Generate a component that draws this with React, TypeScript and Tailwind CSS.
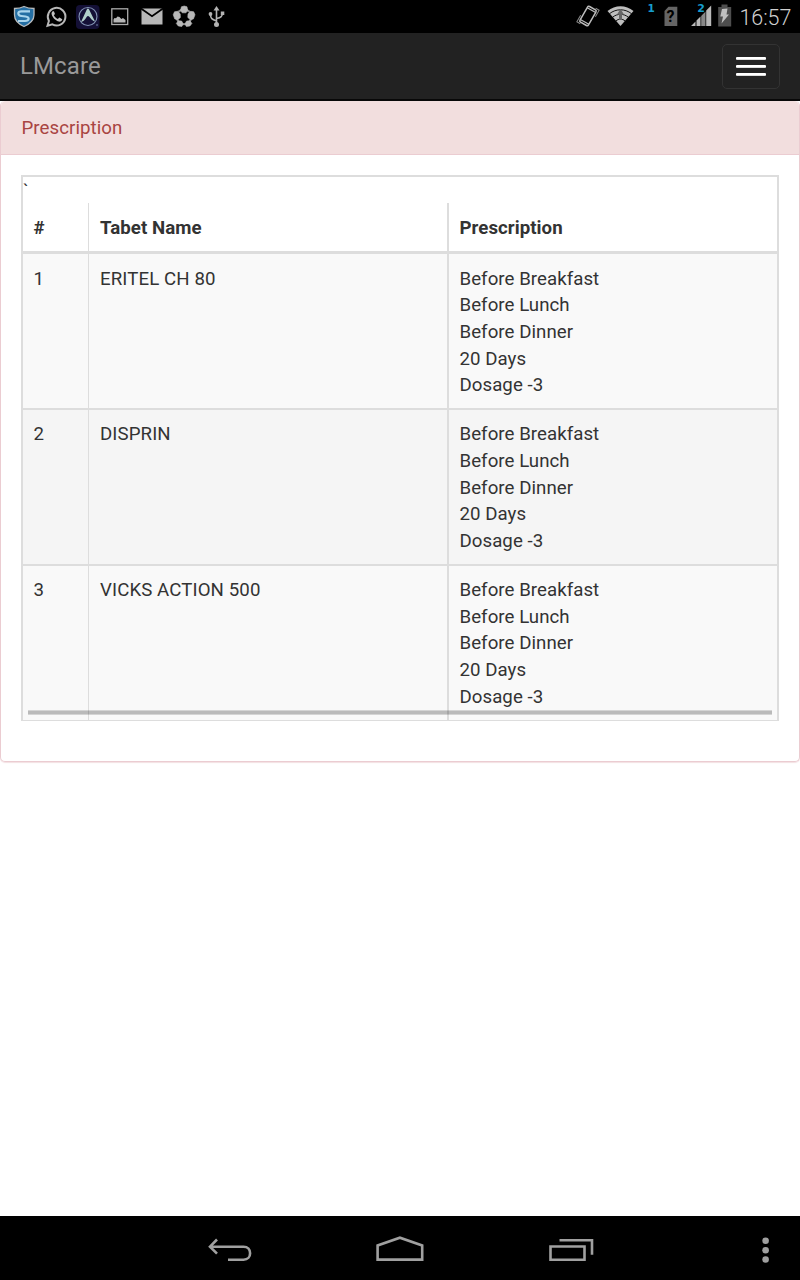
import type { ReactNode } from "react";

const medicines = [
  { id: 1, name: "ERITEL CH 80", row: "h-[156px] border-b-2 bg-[#f9f9f9] leading-[26.650px]", cell: "pt-[11.600px]" },
  { id: 2, name: "DISPRIN", row: "h-[156px] border-b-2 bg-[#f5f5f5]", cell: "pt-[11.300px]" },
  { id: 3, name: "VICKS ACTION 500", row: "h-[154px] bg-[#f9f9f9]", cell: "pt-[11px]" },
];

const directions = ["Before Breakfast", "Before Lunch", "Before Dinner", "20 Days", "Dosage -3"];

function StatusIcon({ children }: { children: ReactNode }) {
  return (
    <svg className="h-[33px] w-8" viewBox="0 0 32 33" fill="none">
      {children}
    </svg>
  );
}

function StatusBar() {
  return (
    <div className="flex h-[33px] shrink-0 justify-between bg-black">
      <div className="flex pl-2">
        <StatusIcon>
          <path d="M16 6.5C13 8 10 8.5 6.5 8.5V15c0 5.500 4 9 9.500 11.500C21.500 24 26 20.500 26 15V8.500C22 8.500 19 8 16 6.500Z" fill="#246fa4" stroke="#b7bbbd" strokeWidth="1.300" />
          <path d="M22 11.300h-8.500c-4.500 0-4 4.200 0 4.700l4 .5c4.500.5 4 4.500-.5 4.500H10" stroke="#a9d5ed" strokeWidth="2.200" />
        </StatusIcon>
        <StatusIcon>
          <path d="m7.500 25.800 1.400-4.900a8.800 8.800 0 1 1 3.500 3.500z" stroke="#b8b8b8" strokeWidth="2" />
          <path d="M12.700 11.300c-1 .8-1.400 2-1 3.300.9 3.200 4 6.300 7.300 7 1.500.2 3-.6 3.300-2.300l-2.900-1.800-1.600 1.500c-2-.9-3.300-2.300-4-3.800l1.200-1.300-1.100-2.700z" fill="#c2c2c2" />
        </StatusIcon>
        <StatusIcon>
          <rect x="4" y="5" width="23.500" height="24" rx="4" fill="#141036" />
          <circle cx="16" cy="16.500" r="9" stroke="#8293b4" strokeWidth="1.100" />
          <path d="m9 22 5.800-12.500c.6-1.200 1.700-1.200 2.300 0L23 21.500c-3.700-.8-5.200-5.500-7-5.500s-2.500 5-7 6Z" fill="#b0cec9" />
          <path d="M24 25h2" stroke="#7082a5" />
        </StatusIcon>
        <StatusIcon>
          <rect x="7.800" y="8.800" width="15.900" height="15.700" stroke="#aaa" strokeWidth="1.300" />
          <path d="M9.500 22.500v-3l1-1.500 1.500.3 1.500-1.800 2 .5 1.800 2 1.700-1 2.500 2v2.500z" fill="#b6b6b6" />
        </StatusIcon>
        <StatusIcon>
          <path d="M5.500 8.500h21v16h-21z" fill="#b8b8b8" />
          <path d="m5 8.500 11 7.700 11-7.700" stroke="black" strokeWidth="1.800" />
        </StatusIcon>
        <StatusIcon>
          <circle cx="16" cy="16.800" r="7.400" stroke="#8a8a8a" strokeWidth="2" />
          <path
            d="m13.400 6.800 2.800-.8 2.800.8.700 3.700-1.700 2.300h-3.800l-1.700-2.300zM22.700 11.300l3 .5 1.300 3-1.600 4.200-3 .8-2.600-2.300.2-3.700zM9.500 11.300l-3 .5-1.300 3L6.800 19l3 .8 2.600-2.300-.2-3.700zM10.300 20.800l3.300.2 1.700 3-1.500 2.500-3.500-.5-2-2.600zM21.900 20.800l-3.300.2-1.700 3 1.500 2.500 3.500-.5 2-2.600z"
            fill="#b8b8b8"
            stroke="#b8b8b8"
            strokeLinejoin="round"
            strokeWidth="0.600"
          />
        </StatusIcon>
        <StatusIcon>
          <path d="M16.500 9v15M16.500 21c-4.500-1.500-6-2.500-6-6.500M16.500 18.500c4.500-1 6-2 6-6" stroke="#b3b3b3" strokeWidth="1.600" />
          <path d="m16.500 6 3 4.500h-6z" fill="#b3b3b3" />
          <circle cx="16.500" cy="24.500" r="2.500" fill="#b3b3b3" />
          <circle cx="10.500" cy="14" r="1.900" fill="#b3b3b3" />
          <path d="M20.800 11.500h3.500v3.500h-3.500z" fill="#b3b3b3" />
        </StatusIcon>
      </div>
      <div className="flex">
        <svg className="h-[33px] w-[162px]" viewBox="570 0 162 33" fill="none">
          <g transform="translate(588 16) rotate(30)">
            <rect x="-4.900" y="-9" width="9.800" height="18" rx="1.500" stroke="#bcbcbc" strokeWidth="1.500" />
            <path d="M-4.900-6.800h9.800M-4.900 6.800h9.800" stroke="#bcbcbc" strokeWidth="1.200" />
            <path d="M-6.800 3v7.500h4M6.800-3v-7.500h-4" stroke="#888" strokeWidth="1" />
          </g>
          <path d="M620.500 26 607.500 11c7.500-6.500 18.500-6.500 26 0z" fill="#bebebe" />
          <path d="M609.500 13.700c6.500-5.200 15.500-5.200 22 0M612.500 17.300c5-4 11-4 16 0M615.800 21c3-2.500 6.400-2.500 9.400 0" stroke="black" strokeWidth="0.900" />
          <path d="m620.500 9-3.500 5.500h2V20h3v-5.500h2z" fill="#666" />
          <text x="647.500" y="11.500" fill="#169dcc" className="font-['DejaVu_Sans'] text-[10.500px] font-bold">1</text>
          <path d="m664.500 11 4-4.300h8.800V26h-12.800z" fill="#656565" />
          <text x="666.500" y="22.400" fill="black" className="font-['Roboto'] text-[16px] font-bold">?</text>
          <path d="m691 26 4.500-4.500V26zM696.500 26v-5.500l4-4V26z" fill="#b9b9b9" />
          <path d="M701.200 26V16l4.300-4.500V26z" fill="#888" />
          <path d="M706.200 26V10.500l5-5V26z" fill="#b9b9b9" />
          <text x="697.200" y="12" fill="#169dcc" stroke="black" strokeWidth="1" paintOrder="stroke" className="font-['DejaVu_Sans'] text-[11px] font-bold">2</text>
          <path d="M721.500 4.500h6V7h3.700v19.500h-13V7h3.300z" fill="#4e4e4e" />
          <path d="m722 9 5.500-.5-1 6h2.500l-7.500 9 1.500-7h-2.700z" fill="#c0c0c0" />
        </svg>
        <time className="w-[68px] pl-[7.500px] text-[21.500px] leading-[36px] font-light tracking-[-0.100px] text-[#d0d0d0]">16:57</time>
      </div>
    </div>
  );
}

function Navbar() {
  return (
    <nav className="flex h-[68px] shrink-0 items-start justify-between border-b-2 border-[#080808] bg-[#222] pr-5 pl-5">
      <span className="pt-[17px] text-[24px] leading-8 tracking-[0.100px] text-[#999]">LMcare</span>
      <button aria-label="Menu" className="mt-[11px] flex h-[45px] w-[58px] flex-col items-center gap-[5.500px] rounded-[5px] border border-[#333] pt-3">
        <span className="h-[2.500px] w-[30px] rounded-[1px] bg-linear-to-b from-white from-75% to-[#999]" />
        <span className="h-[2.500px] w-[30px] rounded-[1px] bg-linear-to-b from-white from-75% to-[#999]" />
        <span className="h-[2.500px] w-[30px] rounded-[1px] bg-linear-to-b from-white from-75% to-[#999]" />
      </button>
    </nav>
  );
}

const columns = "grid shrink-0 grid-cols-[66px_360px_1fr] border-[#ddd]";

function PrescriptionTable() {
  return (
    <div className="relative flex h-[546px] flex-col border-x-2 border-t-2 border-b border-[#ddd] text-[18.670px] leading-[26.670px] tracking-[0.050px] text-[#333]">
      <div className="h-[26px] shrink-0 pt-px">`</div>
      <div className={`${columns} h-[51px] border-b-3 font-bold`}>
        <div className="border-r border-[#ddd] pt-3 pl-[10.500px]">#</div>
        <div className="border-r-2 border-[#ddd] pt-3 pl-[11px]">Tabet Name</div>
        <div className="pt-3 pl-[10.500px]">Prescription</div>
      </div>
      {medicines.map(({ id, name, row, cell }) => (
        <div key={id} className={`${columns} ${row}`}>
          <div className={`border-r border-[#ddd] pl-[10.500px] ${cell}`}>{id}</div>
          <div className={`border-r-2 border-[#ddd] pl-[11px] tracking-[0.100px] ${cell}`}>{name}</div>
          <div className={`pl-[10.500px] ${cell}`}>
            {directions.map((direction) => (
              <div key={direction}>{direction}</div>
            ))}
          </div>
        </div>
      ))}
      <div className="absolute right-[5px] bottom-[5px] left-[5px] h-[5px] border-y border-black/15 bg-black/25 bg-clip-padding" />
    </div>
  );
}

function NavigationBar() {
  return (
    <div className="flex h-16 shrink-0 items-start bg-black">
      <svg className="ml-[200px] h-16 w-[60px]" viewBox="200 1216 60 64" fill="none" stroke="#a0a0a0" strokeWidth="2.600">
        <path d="M217 1239.500 210 1246.700l7 7M211 1246.700h32.500c8.800 0 8.800 13 0 13H228" />
      </svg>
      <svg className="ml-[110px] h-16 w-[60px]" viewBox="370 1216 60 64" fill="none" stroke="#a0a0a0" strokeWidth="2.600">
        <path d="M377.600 1259.600v-14.200l22.300-7.700 22.300 7.700v14.200z" />
      </svg>
      <svg className="ml-[110px] h-16 w-[60px]" viewBox="540 1216 60 64" fill="none" stroke="#a0a0a0" strokeWidth="2.600">
        <path d="M550.500 1246.500h34v13.200h-34zM559.500 1240.200h32.500v14.500" />
      </svg>
      <svg className="ml-[150px] h-16 w-[30px]" viewBox="750 1216 30 64" fill="#a0a0a0">
        <circle cx="765.600" cy="1240.800" r="3.300" />
        <circle cx="765.600" cy="1250.200" r="3.300" />
        <circle cx="765.600" cy="1259.500" r="3.300" />
      </svg>
    </div>
  );
}

export default function App() {
  return (
    <div className="flex h-[1280px] w-[800px] flex-col overflow-hidden bg-white font-['Roboto',sans-serif]">
      <StatusBar />
      <Navbar />
      <main className="flex-1">
        <section className="h-[661px] rounded-[5px] border border-t-0 border-[#ebccd1] shadow-[0_1px_1px_rgba(235,204,209,0.6)]">
          <h1 className="h-[54px] rounded-t-[5px] border-b border-[#ebccd1] bg-[#f2dede] pt-[14px] pl-[20.500px] text-[18.670px] leading-[26.670px] tracking-[0.060px] text-[#a94442]">
            Prescription
          </h1>
          <div className="px-5 pt-5">
            <PrescriptionTable />
          </div>
        </section>
      </main>
      <NavigationBar />
    </div>
  );
}
